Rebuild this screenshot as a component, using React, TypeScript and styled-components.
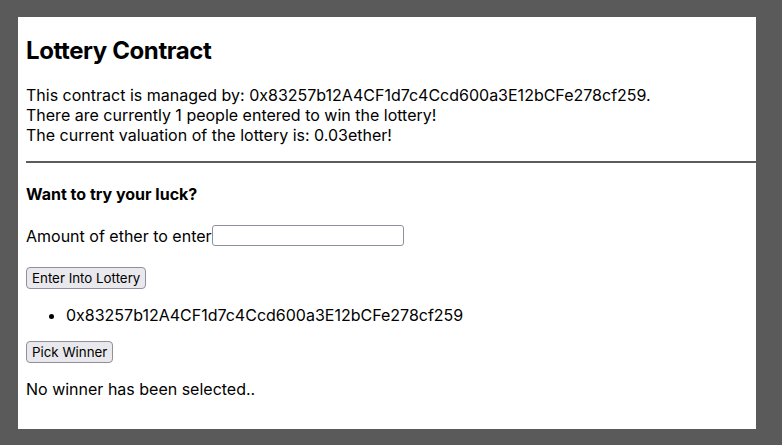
import React from "react";
import styled, { createGlobalStyle } from "styled-components";

const Global = createGlobalStyle`
  html, body {
    margin: 0;
    padding: 0;
    background: #5a5a5a;
  }
  body {
    font-family: Inter, "Noto Sans", "Liberation Sans", sans-serif;
    color: #000;
  }
`;

const Frame = styled.div`
  padding: 17px 0 0 18px;
  height: 445px;
  box-sizing: border-box;
`;

const Panel = styled.main`
  display: flow-root;
  width: 738px;
  height: 412px;
  box-sizing: border-box;
  padding-left: 8px;
  background: #fff;
  overflow: hidden;
  font-size: 16px;
  line-height: 20px;
`;

const Title = styled.h2`
  font-size: 24px;
  line-height: 29px;
  font-weight: 700;
  letter-spacing: -0.4px;
  margin: 19px 0 20px;
`;

const Para = styled.p<{ $top?: number }>`
  margin: ${(p) => p.$top ?? 16}px 0 16px;
`;

const Rule = styled.hr`
  margin: 0;
  border: none;
  height: 2px;
  background: #5c5c5c;
`;

const SubTitle = styled.h4`
  font-size: 16px;
  font-weight: 700;
  margin: 21px 0 21px;
`;

const Field = styled.div`
  display: flex;
  align-items: center;
  height: 21px;
`;

const Input = styled.input`
  width: 192px;
  height: 21px;
  box-sizing: border-box;
  margin: 0;
  border: 1px solid #8f8f9d;
  border-radius: 3px;
  background: #fff;
  padding: 1px 2px;
  font: inherit;
`;

const ButtonRow = styled.div<{ $top: number }>`
  margin-top: ${(p) => p.$top}px;
  line-height: 0;
`;

const Button = styled.button`
  height: 22px;
  box-sizing: border-box;
  padding: 0 5px;
  margin: 0;
  border: 1px solid #8f8f9d;
  border-radius: 4px;
  background: #e9e9ed;
  color: #000;
  font-family: Inter, "Noto Sans", "Liberation Sans", sans-serif;
  font-size: 13.33px;
  line-height: 20px;
`;

const Players = styled.ul`
  margin: 16px 0;
  padding-left: 40px;
`;

export default function App() {
  return (
    <>
      <Global />
      <Frame>
        <Panel>
          <Title>Lottery Contract</Title>
          <Para $top={0}>
            This contract is managed by: 0x83257b12A4CF1d7c4Ccd600a3E12bCFe278cf259.
            <br />
            There are currently 1 people entered to win the lottery!
            <br />
            The current valuation of the lottery is: 0.03ether!
          </Para>
          <Rule />
          <SubTitle>Want to try your luck?</SubTitle>
          <Field>
            <label>Amount of ether to enter</label>
            <Input type="text" />
          </Field>
          <ButtonRow $top={21}>
            <Button>Enter Into Lottery</Button>
          </ButtonRow>
          <Players>
            <li>0x83257b12A4CF1d7c4Ccd600a3E12bCFe278cf259</li>
          </Players>
          <ButtonRow $top={0}>
            <Button>Pick Winner</Button>
          </ButtonRow>
          <Para>No winner has been selected..</Para>
        </Panel>
      </Frame>
    </>
  );
}
